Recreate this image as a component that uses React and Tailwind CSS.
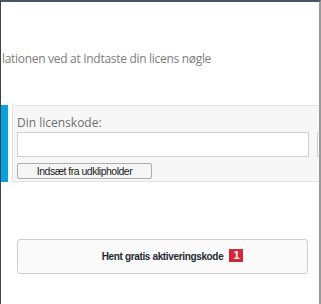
export default function App() {
  return (
    <div className="relative w-[321px] h-[304px] overflow-hidden bg-white border-l border-l-[#3d4350] border-r-2 border-r-[#9a9a9a] border-t-2 border-t-[#4c535f] font-['Open_Sans',sans-serif]">
      <div className="pt-[49px] pl-px text-[12px] leading-[16px] tracking-[-0.3px] text-[#7d7d7d] whitespace-nowrap">
        lationen ved at Indtaste din licens nøgle
      </div>

      <div className="mt-[38px] flex h-[77px]">
        <div className="w-[7px] shrink-0 bg-[#0aa2de]" />
        <div className="ml-[4px] w-[320px] shrink-0 border border-[#e3e3e3] bg-[#f7f7f7] pl-[4px] pt-[9px]">
          <div className="text-[12px] leading-[16px] text-[#6e6e6e]">Din licenskode:</div>
          <div className="mt-[1px] flex gap-[8px]">
            <div className="w-[292px] h-[25px] shrink-0 border border-[#cfcfcf] bg-white" />
            <div className="w-[10px] h-[25px] shrink-0 border border-[#cfcfcf] rounded-l-[2px] bg-white" />
          </div>
          <button className="mt-[2px] w-[135px] h-[16px] border border-[#adadad] rounded-[2px] bg-[#f6f6f6] font-['Liberation_Sans',sans-serif] text-[10.5px] leading-[14px] tracking-[-0.5px] text-[#222]">
            Indsæt fra udklipholder
          </button>
        </div>
      </div>

      <div className="mt-[57px] ml-[16px] flex h-[35px] w-[291px] items-center justify-center rounded-[3px] border border-[#cdcdcd] bg-[#fafafa]">
        <span className="relative font-['Liberation_Sans',sans-serif] text-[10px] font-bold leading-[14px] tracking-[-0.35px] text-[#1f2a33]">
          Hent gratis aktiveringskode
          <span className="absolute left-full top-[-1px] ml-[6px] flex h-[13px] w-[14px] items-center justify-center bg-[#d2283a] text-[11px] font-bold leading-none text-white">
            1
          </span>
        </span>
      </div>
    </div>
  );
}
